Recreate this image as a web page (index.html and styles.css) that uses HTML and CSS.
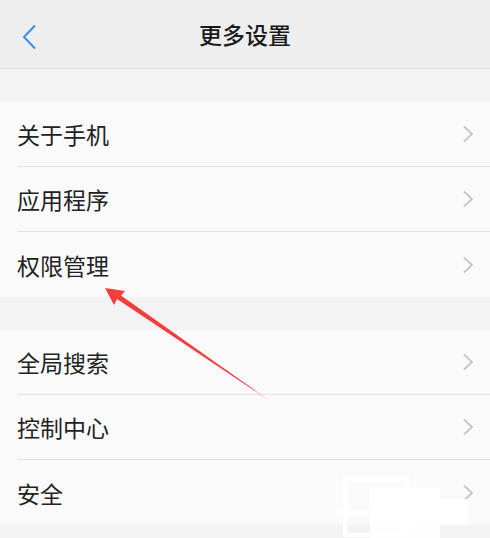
FILE: index.html
```html
<!DOCTYPE html>
<html lang="zh-CN">
<head>
<meta charset="utf-8">
<title>更多设置</title>
<link rel="stylesheet" href="styles.css">
</head>
<body>
<div class="screen">
  <header class="topbar">
    <svg class="back" width="16" height="26" viewBox="0 0 16 26"><path d="M14 1.5 L3 13 L14 24.5" fill="none" stroke="#3a8fe6" stroke-width="2"/></svg>
    <h1 class="title">更多设置</h1>
  </header>
  <div class="gap"></div>
  <ul class="group">
    <li class="row"><span>关于手机</span><svg class="chev" width="12" height="18" viewBox="0 0 12 18"><path d="M2 1.5 L10 9 L2 16.5" fill="none" stroke="#c6c6c6" stroke-width="1.8"/></svg></li>
    <li class="row"><span>应用程序</span><svg class="chev" width="12" height="18" viewBox="0 0 12 18"><path d="M2 1.5 L10 9 L2 16.5" fill="none" stroke="#c6c6c6" stroke-width="1.8"/></svg></li>
    <li class="row"><span>权限管理</span><svg class="chev" width="12" height="18" viewBox="0 0 12 18"><path d="M2 1.5 L10 9 L2 16.5" fill="none" stroke="#c6c6c6" stroke-width="1.8"/></svg></li>
  </ul>
  <div class="gap"></div>
  <ul class="group">
    <li class="row"><span>全局搜索</span><svg class="chev" width="12" height="18" viewBox="0 0 12 18"><path d="M2 1.5 L10 9 L2 16.5" fill="none" stroke="#c6c6c6" stroke-width="1.8"/></svg></li>
    <li class="row"><span>控制中心</span><svg class="chev" width="12" height="18" viewBox="0 0 12 18"><path d="M2 1.5 L10 9 L2 16.5" fill="none" stroke="#c6c6c6" stroke-width="1.8"/></svg></li>
    <li class="row"><span>安全</span><svg class="chev" width="12" height="18" viewBox="0 0 12 18"><path d="M2 1.5 L10 9 L2 16.5" fill="none" stroke="#c6c6c6" stroke-width="1.8"/></svg></li>
  </ul>

  <svg class="arrow" width="490" height="538" viewBox="0 0 490 538">
    <polygon points="105,288 125,291 121,295.5 270,401 117,299 114,305" fill="#f43d3d"/>
  </svg>

  <div class="wm wm-frame"></div>
  <div class="wm wm-a"></div>
  <div class="wm wm-b"></div>
  <div class="wm wm-c"></div>
</div>
</body>
</html>
```

FILE: styles.css
```css
* { box-sizing: border-box; }
html, body { margin: 0; padding: 0; }
body {
  background: #f3f3f3;
  font-family: "Noto Sans CJK SC", "Noto Sans", sans-serif;
}
.screen {
  position: relative;
  width: 490px;
  height: 538px;
  overflow: hidden;
  background: #f3f3f3;
}
.topbar {
  position: relative;
  height: 69px;
  background: #eeeeee;
  border-bottom: 1px solid #dcdcdc;
  display: flex;
  align-items: center;
  justify-content: center;
}
.back {
  position: absolute;
  left: 21px;
  top: 24px;
}
.title {
  margin: 0;
  font-size: 23px;
  font-weight: 500;
  color: #1a1a1a;
  letter-spacing: 0;
  line-height: 1;
}
.gap { height: 33px; }
.group {
  list-style: none;
  margin: 0;
  padding: 0 0 0 17px;
  background: #fafafa;
}
.row {
  height: 65px;
  display: flex;
  align-items: center;
  justify-content: space-between;
  padding-right: 16px;
  border-bottom: 1px solid #e2e2e2;
  font-size: 23px;
  color: #222;
}
.row:last-child { border-bottom: none; }
.row span { line-height: 1; padding-top: 1px; }
.chev { display: block; }
.arrow {
  position: absolute;
  left: 0;
  top: 0;
  pointer-events: none;
}
.wm { position: absolute; }
.wm-frame {
  left: 343px; top: 477px; width: 66px; height: 60px;
  border: 4px solid #ffffff;
}
.wm-a {
  left: 370px; top: 488px; width: 70px; height: 50px;
  background: rgba(255,255,255,0.92);
}
.wm-b {
  left: 428px; top: 499px; width: 40px; height: 26px;
  background: rgba(255,255,255,0.9);
}
.wm-c {
  left: 336px; top: 510px; width: 40px; height: 6px;
  background: #ffffff;
}
```
